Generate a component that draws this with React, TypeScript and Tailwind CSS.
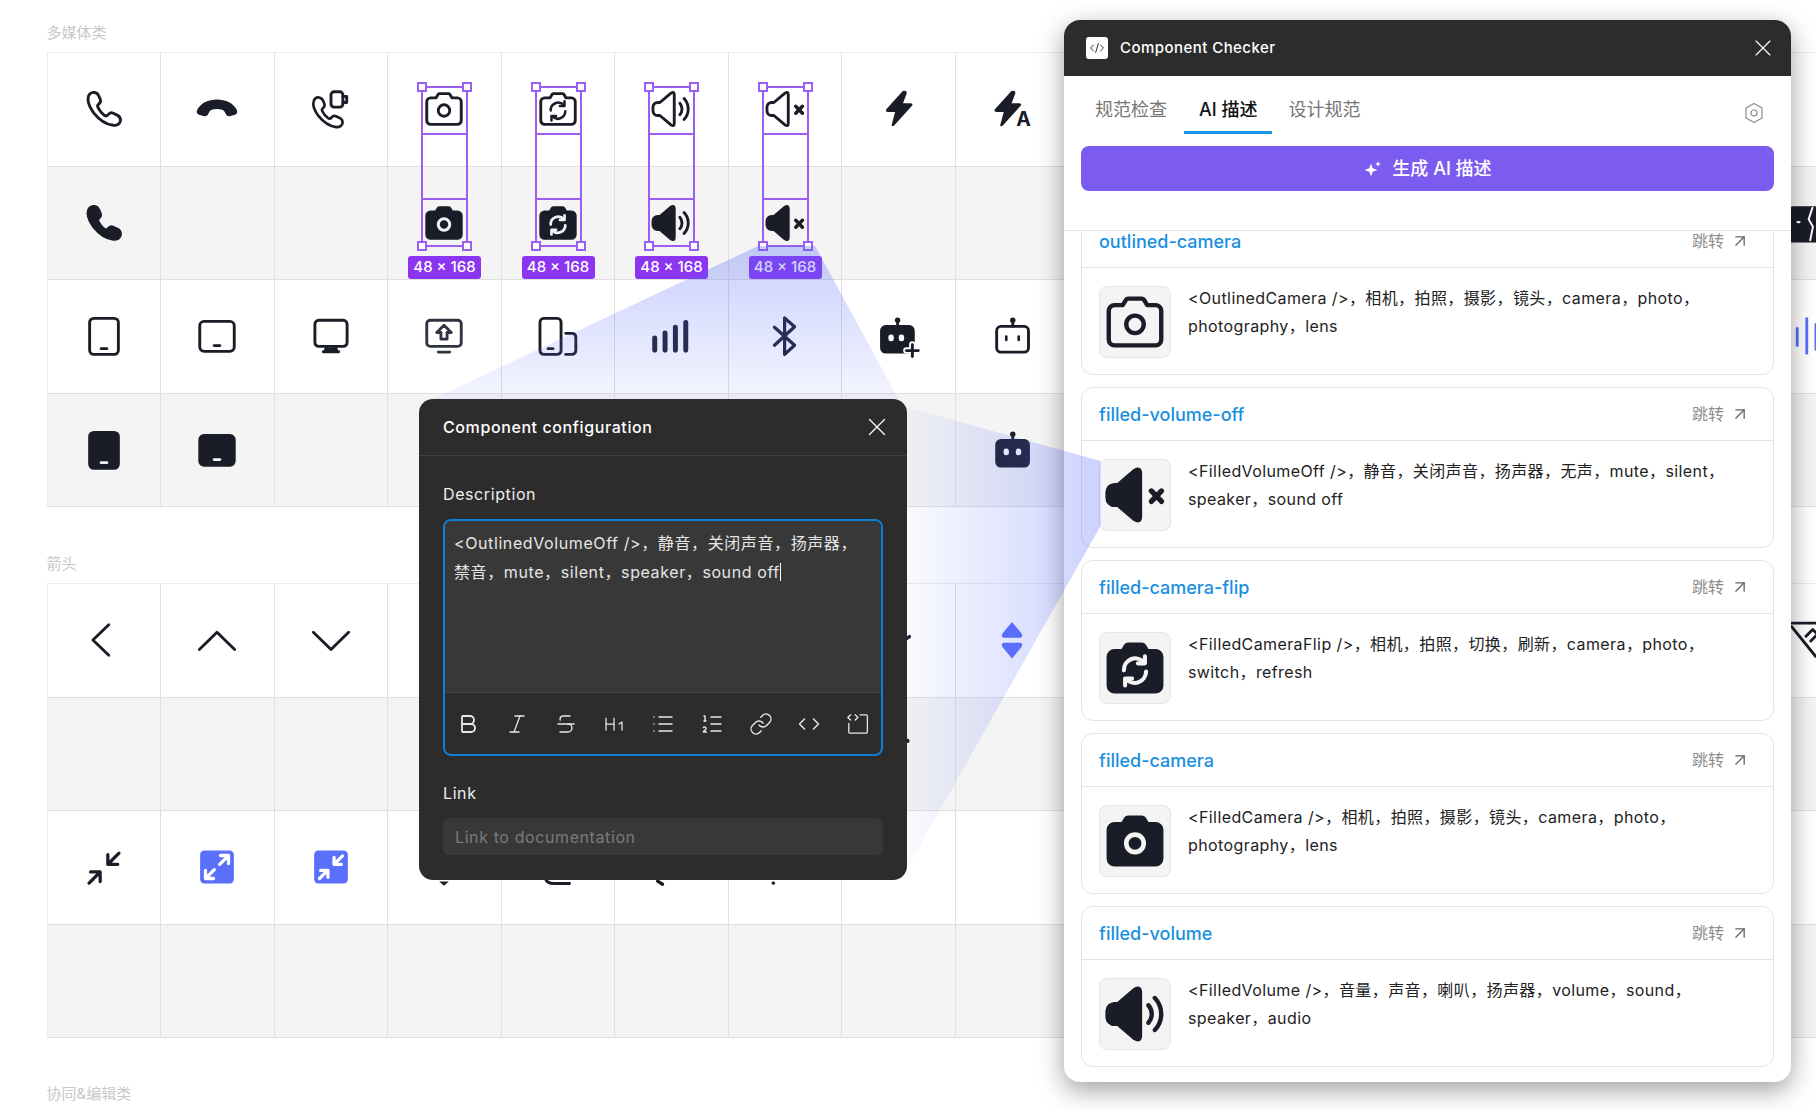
import React from "react";
import { Bold, Italic, Strikethrough, Heading1, List, ListOrdered, Link, X, ArrowUpRight } from "lucide-react";

const DARK = "#1a1d27";
const BLUE = "#5a6ffa";

type P = { s?: number };
const Svg = ({ s = 46, children, sw = 1.5 }: { s?: number; children: React.ReactNode; sw?: number }) => (
  <svg width={s} height={s} viewBox="0 0 24 24" fill="none" stroke={DARK} strokeWidth={sw} strokeLinecap="round" strokeLinejoin="round">
    {children}
  </svg>
);

const PHONE =
  "M7.2 3.4C6 3.1 4.6 3.8 4 5C3.2 7 4 10.5 6.6 14C9 17 12.8 20 16.8 20.5C18.8 20.7 20.6 19.6 20.6 18C20.7 16.6 20 15.8 18.9 15.2L16.8 14.2C15.8 13.8 14.7 14.2 14.1 15C13.6 15.7 13 15.8 12.2 15.3C10.8 14.3 9.6 12.8 8.9 11.3C8.5 10.6 8.6 9.9 9.3 9.4C10.1 8.8 10.4 7.8 10 6.8L9.2 5C8.8 4.1 8.1 3.6 7.2 3.4Z";
const CAM =
  "M7.8 6.2L8.9 4.4Q9.2 4 9.7 4H14.3Q14.8 4 15.1 4.4L16.2 6.2H19A2 2 0 0 1 21 8.2V18A2 2 0 0 1 19 20H5A2 2 0 0 1 3 18V8.2A2 2 0 0 1 5 6.2Z";
const SPK =
  "M6.2 8.6L12 3.7Q13.7 2.6 13.7 4.6V19.4Q13.7 21.4 12 20.3L6.2 15.4H5A2.4 2.4 0 0 1 2.6 13V11A2.4 2.4 0 0 1 5 8.6Z";
const BOLT = "M14.5 2.6L6 12Q5 13.6 7 13.6H10.5L8.6 20.6Q9 21.4 10 20.6L19.4 10.2Q20 9 18.4 9H14.6L16.6 3.6Q16.6 2 14.5 2.6Z";

const FlipArrows = ({ c, sw = 1.5 }: { c: string; sw?: number }) => (
  <g stroke={c} strokeWidth={sw} fill="none">
    <path d="M8.2 12.8A3.9 3.9 0 0 1 15 10" />
    <path d="M15.4 8V10.4H13" />
    <path d="M15.8 13.2A3.9 3.9 0 0 1 9 15.8" />
    <path d="M8.6 18V15.6H11" />
  </g>
);

const PhoneOutline = ({ s }: P) => <Svg s={s}><path d={PHONE} /></Svg>;
const PhoneFilled = ({ s }: P) => <Svg s={s}><path d={PHONE} fill={DARK} /></Svg>;
const Hangup = ({ s }: P) => (
  <Svg s={s} sw={0}>
    <path fill={DARK} d="M1.6 12.5C3.5 8.8 7.5 7 12 7C16.5 7 20.5 8.8 22.4 12.5C22.8 13.5 22.5 14.6 21.4 15L19 15.7C18 16 17 15.5 16.6 14.6L15.9 13.3C15.2 12.4 13.6 12 12 12C10.4 12 8.8 12.4 8.1 13.3L7.4 14.6C7 15.5 6 16 5 15.7L2.6 15C1.5 14.6 1.2 13.5 1.6 12.5Z" />
  </Svg>
);
const PhoneVideo = ({ s }: P) => (
  <Svg s={s}>
    <path d={PHONE} transform="translate(-0.5,3) scale(0.9)" />
    <rect x="12" y="3" width="6.2" height="8" rx="1.6" fill="#fff" />
    <path d="M18.2 5.4H20.2V8.6H18.2" />
  </Svg>
);
const CamO = ({ s }: P) => <Svg s={s}><path d={CAM} /><circle cx="12" cy="12.8" r="3" /></Svg>;
const CamF = ({ s }: P) => (
  <Svg s={s}>
    <path d={CAM} fill={DARK} />
    <circle cx="12" cy="12.8" r="3" stroke="#f4f4f4" strokeWidth="1.6" />
  </Svg>
);
const FlipO = ({ s }: P) => <Svg s={s}><path d={CAM} /><FlipArrows c={DARK} sw={1.3} /></Svg>;
const FlipF = ({ s }: P) => <Svg s={s}><path d={CAM} fill={DARK} /><FlipArrows c="#f4f4f4" sw={1.4} /></Svg>;
const Waves = () => (
  <g>
    <path d="M16.6 9A4.5 4.5 0 0 1 16.6 15" />
    <path d="M18.8 6.5A8 8 0 0 1 18.8 17.5" />
  </g>
);
const VolO = ({ s }: P) => <Svg s={s}><path d={SPK} /><Waves /></Svg>;
const VolF = ({ s }: P) => <Svg s={s}><path d={SPK} fill={DARK} /><Waves /></Svg>;
const OffX = () => <path d="M17.6 10.6L21.1 14.2M21.1 10.6L17.6 14.2" strokeWidth="1.8" />;
const OffO = ({ s }: P) => <Svg s={s}><path d={SPK} /><OffX /></Svg>;
const OffF = ({ s }: P) => <Svg s={s}><path d={SPK} fill={DARK} /><OffX /></Svg>;
const Bolt = ({ s }: P) => <Svg s={s} sw={0}><path d={BOLT} fill={DARK} /></Svg>;
const BoltA = ({ s }: P) => (
  <Svg s={s} sw={0}>
    <path d={BOLT} fill={DARK} transform="translate(-2.8,0)" />
    <text x="14.2" y="20.8" fontSize="10.2" fontWeight="700" fontFamily="Inter" fill={DARK}>A</text>
  </Svg>
);
const TabletP = ({ s }: P) => <Svg s={s}><rect x="4.5" y="2.8" width="15" height="18.8" rx="2.2" /><path d="M10.5 18.6H13.5" /></Svg>;
const TabletL = ({ s }: P) => <Svg s={s}><rect x="3" y="4.4" width="18" height="15.6" rx="2.2" /><path d="M10.5 17H13.5" /></Svg>;
const TabletPF = ({ s }: P) => (
  <Svg s={s}>
    <rect x="4.5" y="2.8" width="15" height="18.8" rx="2.2" fill={DARK} />
    <path d="M10.5 18.6H13.5" stroke="#f4f4f4" />
  </Svg>
);
const TabletLF = ({ s }: P) => (
  <Svg s={s}>
    <rect x="3" y="4.4" width="18" height="15.6" rx="2.2" fill={DARK} />
    <path d="M10.5 17H13.5" stroke="#f4f4f4" />
  </Svg>
);
const Monitor = ({ s }: P) => (
  <Svg s={s}>
    <rect x="3.6" y="3.8" width="16.8" height="13.6" rx="2" />
    <path d="M9.5 18L9 19.8H15L14.5 18" fill={DARK} />
    <path d="M8 20.2H16" />
  </Svg>
);
const Share = ({ s }: P) => (
  <Svg s={s}>
    <g stroke="#2f3342">
      <rect x="3" y="3.8" width="18" height="13.6" rx="1.8" />
      <path d="M12 6.4L15.8 10.2H13.6V13.6H10.4V10.2H8.2Z" />
      <path d="M9 20.4H15" />
    </g>
  </Svg>
);
const Devices = ({ s }: P) => (
  <Svg s={s}>
    <rect x="2.6" y="2.8" width="11" height="18.8" rx="2" />
    <path d="M6.8 18.6H9.4" />
    <path d="M16 10.6H19.5A2 2 0 0 1 21.3 12.6V19.6A2 2 0 0 1 19.3 21.6H16" />
  </Svg>
);
const Signal = ({ s }: P) => (
  <Svg s={s} sw={2.6}>
    <path d="M3.5 13V19.4M8.9 10.4V19.4M14.3 7.4V19.4M19.7 5V19.4" stroke="#1d2233" />
  </Svg>
);
const Bt = ({ s }: P) => <Svg s={s} sw={1.7}><path d="M6.5 7.4L17 16.8L11.8 21.6V2.6L17 7.2L6.5 16.8" stroke="#1d2233" /></Svg>;
const BotBase = ({ filled }: { filled: boolean }) => (
  <g>
    <circle cx="12.4" cy="3.8" r="1.4" fill={DARK} stroke="none" />
    <path d="M12.4 4.4V7" />
    <rect x="4" y="7" width="16.6" height="13.4" rx="2.2" fill={filled ? DARK : "none"} />
  </g>
);
const BotO = ({ s }: P) => (
  <Svg s={s}>
    <BotBase filled={false} />
    <rect x="8.3" y="11.6" width="1.4" height="3.2" rx="0.7" fill={DARK} stroke="none" />
    <rect x="14.8" y="11.6" width="1.4" height="3.2" rx="0.7" fill={DARK} stroke="none" />
  </Svg>
);
const BotF = ({ s }: P) => (
  <Svg s={s}>
    <BotBase filled />
    <rect x="7.6" y="11.2" width="2.8" height="3.6" rx="1.3" fill="#fff" stroke="none" />
    <rect x="14" y="11.2" width="2.8" height="3.6" rx="1.3" fill="#fff" stroke="none" />
  </Svg>
);
const BotAdd = ({ s }: P) => (
  <Svg s={s}>
    <g transform="translate(-0.6,0)">
      <BotBase filled />
      <rect x="7.6" y="11.2" width="2.8" height="3.6" rx="1.3" fill="#fff" stroke="none" />
      <rect x="13" y="11.2" width="2.8" height="3.6" rx="1.3" fill="#fff" stroke="none" />
    </g>
    <path d="M16.4 19.6H22.6M19.5 16.5V22.7" stroke="#fff" strokeWidth="3.4" />
    <path d="M16.4 19.6H22.6M19.5 16.5V22.7" strokeWidth="1.5" />
  </Svg>
);
const ChevL = ({ s }: P) => <Svg s={s}><path d="M14.5 4L6.2 12L14.5 20" /></Svg>;
const ChevU = ({ s }: P) => <Svg s={s}><path d="M2.8 17L12 8L21.2 17" /></Svg>;
const ChevD = ({ s }: P) => <Svg s={s}><path d="M2.8 8L12 17L21.2 8" /></Svg>;
const Compress = ({ s }: P) => (
  <Svg s={s} sw={1.7}>
    <path d="M19.8 4.8L14.3 10.3M14 5.5V10.6H19.2" />
    <path d="M4.2 20.4L9.6 15M5 14.6H10V19.6" />
  </Svg>
);
const Expand = ({ s, inward }: P & { inward?: boolean }) => (
  <Svg s={s} sw={1.7}>
    <rect x="3.2" y="3.4" width="17.6" height="17.2" rx="2.2" fill={BLUE} stroke="none" />
    {inward ? (
      <g stroke="#fff">
        <path d="M18 6.2L13.8 10.4M13.6 7V10.6H17.4" />
        <path d="M6 18L10.2 13.8M6.6 13.8H10.4V17.4" />
      </g>
    ) : (
      <g stroke="#fff">
        <path d="M13.4 10.6L17.8 6.2M13.8 6H18V10.2" />
        <path d="M10.6 13.4L6.2 17.8M6 13.8V18H10.2" />
      </g>
    )}
  </Svg>
);
const Sort = ({ s }: P) => (
  <Svg s={s} sw={0}>
    <path d="M12 2.6L17 8.6Q18 10.8 16 10.8H8Q6 10.8 7 8.6Z" fill={BLUE} />
    <path d="M12 21.6L7 15.6Q6 13.4 8 13.4H16Q18 13.4 17 15.6Z" fill={BLUE} />
  </Svg>
);
const BrokenEdge = ({ s }: P) => (
  <Svg s={s}>
    <rect x="3" y="4" width="21" height="17.4" rx="2" fill={DARK} />
    <path d="M7.6 11.5H8.6" stroke="#fff" strokeWidth="1.2" />
    <path d="M15.4 4L13.4 10L15.6 14L14.2 21" stroke="#fff" strokeWidth="1" />
  </Svg>
);
const BarsEdge = ({ s }: P) => (
  <Svg s={s}>
    <path d="M7.4 8V17M12.4 3V21M17.2 6V19" stroke={BLUE} />
  </Svg>
);
const CrossEdge = ({ s }: P) => (
  <Svg s={s}>
    <path d="M4 3.2H24M4.5 5L17 20.5M18 21V9M14.5 12.5L18 9L21.5 12.5M12 10L15.5 6.5L19 10" />
  </Svg>
);
const PeekA = ({ s }: P) => <Svg s={s} sw={0}><path d="M9.5 19.6H14.5L12 21.8Z" fill={DARK} /></Svg>;
const PeekB = ({ s }: P) => <Svg s={s}><path d="M5.4 18C6 20 8 20.6 10 20.6H18" /></Svg>;
const PeekC = ({ s }: P) => <Svg s={s} sw={1.7}><path d="M5 19.4L7.6 21" /></Svg>;
const PeekD = ({ s }: P) => <Svg s={s} sw={1.7}><path d="M5.8 20.4H6" /></Svg>;
const PeekE = ({ s }: P) => <Svg s={s} sw={1.7}><path d="M12 14L18 10.2" /></Svg>;
const PeekF = ({ s }: P) => <Svg s={s} sw={2}><path d="M17 5V5.2" /></Svg>;

type Cell = React.ComponentType<P> | null;
const _ = null;

const section1: Cell[][] = [
  [PhoneOutline, Hangup, PhoneVideo, CamO, FlipO, VolO, OffO, Bolt, BoltA, _, _, _, _, _, _, _],
  [PhoneFilled, _, _, CamF, FlipF, VolF, OffF, _, _, _, _, _, _, _, _, BrokenEdge],
  [TabletP, TabletL, Monitor, Share, Devices, Signal, Bt, BotAdd, BotO, _, _, _, _, _, _, BarsEdge],
  [TabletPF, TabletLF, _, _, _, _, _, _, BotF, _, _, _, _, _, _, _],
];
const ExpandOut = ({ s }: P) => <Expand s={s} />;
const ExpandIn = ({ s }: P) => <Expand s={s} inward />;
const section2: Cell[][] = [
  [ChevL, ChevU, ChevD, _, _, _, _, PeekE, Sort, _, _, _, _, _, _, CrossEdge],
  [_, _, _, _, _, _, _, PeekF, _, _, _, _, _, _, _, _],
  [Compress, ExpandOut, ExpandIn, PeekA, PeekB, PeekC, PeekD, _, _, _, _, _, _, _, _, _],
  [_, _, _, _, _, _, _, _, _, _, _, _, _, _, _, _],
];

const Handle = ({ cls }: { cls: string }) => (
  <div className={`absolute h-[10px] w-[10px] border-2 border-[#9a5ef0] bg-white ${cls}`} />
);

const Selection = () => (
  <div className="absolute left-[33px] top-[33px] z-10 h-[161px] w-[47px] border-2 border-[#9a5ef0]">
    <div className="absolute inset-x-0 top-[45px] h-[2px] bg-[#9a5ef0]" />
    <div className="absolute inset-x-0 bottom-[45px] h-[2px] bg-[#9a5ef0]" />
    <Handle cls="-left-[6px] -top-[6px]" />
    <Handle cls="-right-[6px] -top-[6px]" />
    <Handle cls="-left-[6px] -bottom-[6px]" />
    <Handle cls="-right-[6px] -bottom-[6px]" />
    <div className="absolute -left-[15px] top-[168px] flex h-[23px] w-[73px] items-center justify-center rounded-[3px] bg-[#8b35f0] text-[15px] font-medium text-white">
      48 × 168
    </div>
  </div>
);

const Grid = ({ rows, selectable }: { rows: Cell[][]; selectable?: boolean }) => (
  <div className="grid w-[1816px] grid-cols-[repeat(16,113.5px)] auto-rows-[113.5px] border-l border-t border-[#ececec]">
    {rows.flatMap((row, r) =>
      row.map((Icon, c) => (
        <div
          key={`${r}-${c}`}
          className={`relative flex items-center justify-center border-b border-r border-[#e0e0e0] ${r % 2 ? "bg-[#f4f4f4]" : "bg-white"}`}
        >
          {Icon ? <Icon /> : null}
          {selectable && r === 0 && c >= 3 && c <= 6 ? <Selection /> : null}
        </div>
      ))
    )}
  </div>
);

const Label = ({ children }: { children: React.ReactNode }) => (
  <div className="mb-[9px] h-[21px] text-[15px] leading-[21px] text-[#c8c8c8]">{children}</div>
);

const SourceIcon = () => (
  <svg width="26" height="26" viewBox="0 0 24 24" fill="none" stroke="#e8e8e8" strokeWidth="1.3" strokeLinecap="round" strokeLinejoin="round">
    <path d="M14 2.8H20A1.4 1.4 0 0 1 21.4 4.2V19.8A1.4 1.4 0 0 1 20 21.2H4.2A1.4 1.4 0 0 1 2.8 19.8V11.5" />
    <path d="M4.6 2.8L1.8 5.4L4.6 8M9.2 2.8L12 5.4L9.2 8" />
  </svg>
);
const CodeIcon = () => (
  <svg width="24" height="24" viewBox="0 0 24 24" fill="none" stroke="#e8e8e8" strokeWidth="1.5" strokeLinecap="round" strokeLinejoin="round">
    <path d="M7.5 7L2.5 12L7.5 17M16.5 7L21.5 12L16.5 17" />
  </svg>
);

const Dialog = () => {
  const tools = [
    <Bold key="b" size={28} strokeWidth={1.8} />,
    <Italic key="i" size={26} strokeWidth={1.3} />,
    <Strikethrough key="s" size={28} strokeWidth={1.4} />,
    <Heading1 key="h" size={32} strokeWidth={1.25} />,
    <List key="l" size={28} strokeWidth={1.45} />,
    <ListOrdered key="o" size={28} strokeWidth={1.45} />,
    <Link key="k" size={28} strokeWidth={1.4} />,
    <CodeIcon key="c" />,
    <SourceIcon key="x" />,
  ];
  return (
    <div className="absolute left-[419px] top-[399px] z-30 h-[481px] w-[488px] rounded-[14px] bg-[#2c2c2c] text-[16px] tracking-[0.6px] text-[#eeeeee]">
      <div className="flex h-[57px] items-center justify-between border-b border-[#3f3f3f] pl-6 pr-[15px]">
        <span className="font-medium text-white">Component configuration</span>
        <X size={30} strokeWidth={1} className="text-white" />
      </div>
      <div className="px-6 pt-[26px]">
        <div className="mb-[13px] h-6 leading-6">Description</div>
        <div className="h-[237px] overflow-hidden rounded-[8px] border-2 border-[#0f7fd6]">
          <div className="h-[172px] border-b border-[#454545] bg-[#383838] pl-[9px] pt-[8px] leading-[28.5px] text-[#e6e6e6]">
            <div className="whitespace-nowrap">{"<OutlinedVolumeOff />，静音，关闭声音，扬声器，"}</div>
            <div className="flex items-center whitespace-nowrap">
              禁音，mute，silent，speaker，sound off
              <span className="inline-block h-[18px] w-px bg-white" />
            </div>
          </div>
          <div className="flex h-[61px] items-center justify-between pl-[11px] pr-[11px] text-[#e8e8e8]">
            {tools.map((t, i) => (
              <span key={i} className="flex h-6 w-6 items-center justify-center">{t}</span>
            ))}
          </div>
        </div>
        <div className="mb-[13px] mt-[25px] h-6 leading-6">Link</div>
        <div className="flex h-[37px] items-center rounded-[6px] bg-[#383838] pl-3 text-[#7b7b7b]">Link to documentation</div>
      </div>
    </div>
  );
};

type CardData = { name: string; Icon: React.ComponentType<P>; l1: string; l2: string };
const cards: CardData[] = [
  { name: "outlined-camera", Icon: CamO, l1: "<OutlinedCamera />，相机，拍照，摄影，镜头，camera，photo，", l2: "photography，lens" },
  { name: "filled-volume-off", Icon: OffF, l1: "<FilledVolumeOff />，静音，关闭声音，扬声器，无声，mute，silent，", l2: "speaker，sound off" },
  { name: "filled-camera-flip", Icon: FlipF, l1: "<FilledCameraFlip />，相机，拍照，切换，刷新，camera，photo，", l2: "switch，refresh" },
  { name: "filled-camera", Icon: CamF, l1: "<FilledCamera />，相机，拍照，摄影，镜头，camera，photo，", l2: "photography，lens" },
  { name: "filled-volume", Icon: VolF, l1: "<FilledVolume />，音量，声音，喇叭，扬声器，volume，sound，", l2: "speaker，audio" },
];

const Card = ({ c }: { c: CardData }) => (
  <div className="h-[161px] shrink-0 rounded-[12px] border border-[#e4e4e4] bg-white">
    <div className="flex h-[53px] items-center justify-between border-b border-[#e4e4e4] pl-[17px] pr-[23px]">
      <span className="text-[18px] font-medium text-[#1a8fe0]">{c.name}</span>
      <span className="flex items-center gap-[6px] text-[16px] text-[#8c8c8c]">
        跳转
        <ArrowUpRight size={20} strokeWidth={1.6} className="text-[#666]" />
      </span>
    </div>
    <div className="flex gap-[17px] pl-[17px] pt-[18px]">
      <div className="flex h-[72px] w-[72px] shrink-0 items-center justify-center rounded-[8px] border border-[#e6e6e6] bg-[#f4f4f4]">
        <c.Icon s={70} />
      </div>
      <div className="-mt-[2px] whitespace-nowrap text-[16px] leading-[28px] tracking-[0.4px] text-[#222]">
        <div>{c.l1}</div>
        <div>{c.l2}</div>
      </div>
    </div>
  </div>
);

const Panel = () => (
  <div className="absolute left-[1064px] top-[20px] z-10 flex h-[1062px] w-[727px] flex-col overflow-hidden rounded-[16px] bg-white shadow-[0_8px_26px_rgba(0,0,0,0.38)]">
    <div className="flex h-[56px] shrink-0 items-center justify-between bg-[#2c2c2c] pl-[22px] pr-[14px]">
      <div className="flex items-center gap-[12px]">
        <div className="flex h-[22px] w-[22px] items-center justify-center rounded-[3px] bg-white">
          <svg width="16" height="16" viewBox="0 0 16 16" fill="none" stroke="#333" strokeWidth="1" strokeLinecap="round" strokeLinejoin="round">
            <path d="M4.5 5L1.5 8L4.5 11M11.5 5L14.5 8L11.5 11M9.3 3.5L6.7 12.5" />
          </svg>
        </div>
        <span className="text-[15px] font-medium tracking-[0.45px] text-white">Component Checker</span>
      </div>
      <X size={28} strokeWidth={1} className="text-white" />
    </div>
    <div className="relative flex h-[58px] shrink-0 items-start pl-[31px] pt-[21px] text-[18px] leading-[26px] text-[#767676]">
      <span>规范检查</span>
      <span className="relative ml-[32px] font-medium text-[#111]">
        AI 描述
        <span className="absolute -left-[15px] -right-[15px] -bottom-[11px] h-[3px] bg-[#1a96e8]" />
      </span>
      <span className="ml-[31px]">设计规范</span>
      <svg className="absolute right-[26px] top-[26px]" width="22" height="22" viewBox="0 0 22 22" fill="none" stroke="#8a8a8a" strokeWidth="1.2" strokeLinejoin="round">
        <path d="M11 1.5L19 6V16L11 20.5L3 16V6Z" />
        <circle cx="11" cy="11" r="3" />
      </svg>
    </div>
    <div className="mx-[17px] mt-[12px] flex h-[45px] shrink-0 items-center justify-center gap-[9px] rounded-[8px] bg-[#7c5cf0] text-[18px] font-medium text-white">
      <svg width="20" height="20" viewBox="0 0 20 20" fill="#fff">
        <path d="M8 4.5L9.7 9.3L14.5 11L9.7 12.7L8 17.5L6.3 12.7L1.5 11L6.3 9.3Z" />
        <path d="M15 2L15.8 4.2L18 5L15.8 5.8L15 8L14.2 5.8L12 5L14.2 4.2Z" />
      </svg>
      生成 AI 描述
    </div>
    <div className="mt-[39px] flex-1 overflow-hidden border-t border-[#e4e4e4]">
      <div className="-mt-[17px] flex flex-col gap-[12px] px-[17px]">
        {cards.map((c) => (
          <Card key={c.name} c={c} />
        ))}
      </div>
    </div>
  </div>
);

const Beams = () => (
  <svg className="pointer-events-none absolute left-0 top-0 z-20" width="1816" height="1110">
    <defs>
      <linearGradient id="beamA" x1="0" y1="246" x2="0" y2="400" gradientUnits="userSpaceOnUse">
        <stop offset="0" stopColor="#5569fa" stopOpacity="0.32" />
        <stop offset="1" stopColor="#5569fa" stopOpacity="0.06" />
      </linearGradient>
      <linearGradient id="beamB" x1="906" y1="0" x2="1100" y2="0" gradientUnits="userSpaceOnUse">
        <stop offset="0" stopColor="#5569fa" stopOpacity="0.03" />
        <stop offset="1" stopColor="#5569fa" stopOpacity="0.3" />
      </linearGradient>
    </defs>
    <polygon points="758,246 815,246 899,400 431,400" fill="url(#beamA)" />
    <polygon points="906,407 1100.5,461 1100.5,526 906,870" fill="url(#beamB)" />
  </svg>
);

export default function App() {
  return (
    <div className="relative h-[1110px] w-[1816px] overflow-hidden bg-white font-['Inter','Noto_Sans_CJK_SC',sans-serif]">
      <div className="pl-[46.5px] pt-[22px]">
        <Label>多媒体类</Label>
        <Grid rows={section1} selectable />
        <div className="mt-[46px]">
          <Label>箭头</Label>
          <Grid rows={section2} />
        </div>
        <div className="mt-[45px]">
          <Label>协同&编辑类</Label>
        </div>
      </div>
      <Panel />
      <Beams />
      <Dialog />
    </div>
  );
}
